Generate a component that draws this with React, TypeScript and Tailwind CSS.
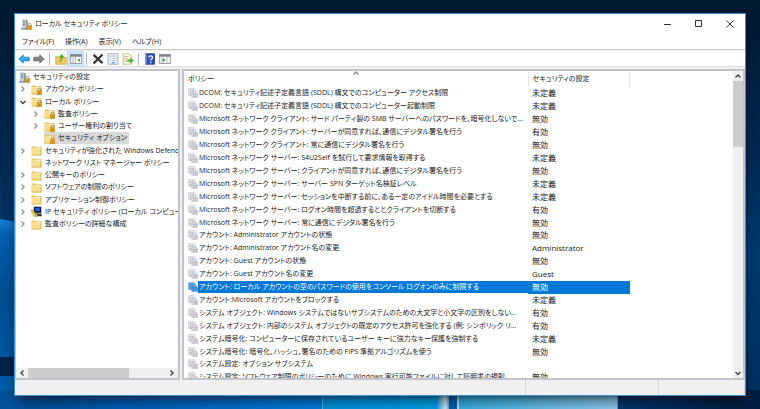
import { useState } from 'react';
import type { ReactNode } from 'react';
import clsx from 'clsx';

type IconName = 'server' | 'folder' | 'locked' | 'ipsec';

type Node = {
  label: string;
  icon: IconName;
  depth: number;
  state?: 'open' | 'closed';
  selected?: boolean;
};

const menus = ['ファイル(F)', '操作(A)', '表示(V)', 'ヘルプ(H)'];

const nodes: Node[] = [
  { label: 'セキュリティの設定', icon: 'server', depth: 0 },
  { label: 'アカウント ポリシー', icon: 'locked', depth: 1, state: 'closed' },
  { label: 'ローカル ポリシー', icon: 'locked', depth: 1, state: 'open' },
  { label: '監査ポリシー', icon: 'locked', depth: 2, state: 'closed' },
  { label: 'ユーザー権利の割り当て', icon: 'locked', depth: 2, state: 'closed' },
  { label: 'セキュリティ オプション', icon: 'locked', depth: 2, selected: true },
  { label: 'セキュリティが強化された Windows Defender', icon: 'folder', depth: 1, state: 'closed' },
  { label: 'ネットワーク リスト マネージャー ポリシー', icon: 'folder', depth: 1 },
  { label: '公開キーのポリシー', icon: 'folder', depth: 1, state: 'closed' },
  { label: 'ソフトウェアの制限のポリシー', icon: 'folder', depth: 1, state: 'closed' },
  { label: 'アプリケーション制御ポリシー', icon: 'folder', depth: 1, state: 'closed' },
  { label: 'IP セキュリティ ポリシー (ローカル コンピューター)', icon: 'ipsec', depth: 1, state: 'closed' },
  { label: '監査ポリシーの詳細な構成', icon: 'folder', depth: 1, state: 'closed' },
];

const policies: [string, string][] = [
  ['DCOM: セキュリティ記述子定義言語 (SDDL) 構文でのコンピューター アクセス制限', '未定義'],
  ['DCOM: セキュリティ記述子定義言語 (SDDL) 構文でのコンピューター起動制限', '未定義'],
  ['Microsoft ネットワーク クライアント: サード パーティ製の SMB サーバーへのパスワードを、暗号化しないで...', '無効'],
  ['Microsoft ネットワーク クライアント: サーバーが同意すれば、通信にデジタル署名を行う', '有効'],
  ['Microsoft ネットワーク クライアント: 常に通信にデジタル署名を行う', '無効'],
  ['Microsoft ネットワーク サーバー: S4U2Self を試行して要求情報を取得する', '未定義'],
  ['Microsoft ネットワーク サーバー: クライアントが同意すれば、通信にデジタル署名を行う', '無効'],
  ['Microsoft ネットワーク サーバー: サーバー SPN ターゲット名検証レベル', '未定義'],
  ['Microsoft ネットワーク サーバー: セッションを中断する前に、ある一定のアイドル時間を必要とする', '未定義'],
  ['Microsoft ネットワーク サーバー: ログオン時間を超過するととクライアントを切断する', '有効'],
  ['Microsoft ネットワーク サーバー: 常に通信にデジタル署名を行う', '無効'],
  ['アカウント: Administrator アカウントの状態', '無効'],
  ['アカウント: Administrator アカウント名の変更', 'Administrator'],
  ['アカウント: Guest アカウントの状態', '無効'],
  ['アカウント: Guest アカウント名の変更', 'Guest'],
  ['アカウント: ローカル アカウントの空のパスワードの使用をコンソール ログオンのみに制限する', '無効'],
  ['アカウント:Microsoft アカウントをブロックする', '未定義'],
  ['システム オブジェクト: Windows システムではないサブシステムのための大文字と小文字の区別をしない...', '有効'],
  ['システム オブジェクト: 内部のシステム オブジェクトの既定のアクセス許可を強化する (例: シンボリック リ...', '有効'],
  ['システム暗号化: コンピューターに保存されているユーザー キーに強力なキー保護を強制する', '未定義'],
  ['システム暗号化: 暗号化、ハッシュ、署名のための FIPS 準拠アルゴリズムを使う', '無効'],
  ['システム設定: オプション サブシステム', ''],
  ['システム設定: ソフトウェア制限のポリシーのために Windows 実行可能ファイルに対して証明書の規則...', '無効'],
];

function Desktop() {
  return (
    <svg aria-hidden="true" className="absolute inset-0 h-full w-full" viewBox="0 0 760 409" preserveAspectRatio="none">
      <defs>
        <linearGradient id="base" x1="0" y1="0" x2="0" y2="1">
          <stop offset="0" stopColor="#001830" />
          <stop offset="0.4" stopColor="#002b55" />
          <stop offset="0.62" stopColor="#003a72" />
          <stop offset="1" stopColor="#00305f" />
        </linearGradient>
        <linearGradient id="left" x1="0" y1="0" x2="0" y2="1">
          <stop offset="0" stopColor="#1483dc" />
          <stop offset="0.08" stopColor="#0561b4" />
          <stop offset="0.4" stopColor="#004d92" />
          <stop offset="1" stopColor="#0062b4" />
        </linearGradient>
        <linearGradient id="floor" x1="0" y1="0" x2="1" y2="0">
          <stop offset="0" stopColor="#00539a" />
          <stop offset="0.4" stopColor="#0064c4" />
          <stop offset="1" stopColor="#0087ec" />
        </linearGradient>
        <linearGradient id="cyan" x1="0" y1="0" x2="1" y2="0">
          <stop offset="0" stopColor="#009cf0" />
          <stop offset="0.88" stopColor="#00acf8" />
          <stop offset="0.95" stopColor="#e4f8ff" />
          <stop offset="1" stopColor="#0078d0" />
        </linearGradient>
        <linearGradient id="pane" x1="0" y1="0" x2="1" y2="0">
          <stop offset="0" stopColor="#38bcf5" />
          <stop offset="1" stopColor="#98d8ff" />
        </linearGradient>
        <linearGradient id="corner" x1="0" y1="0" x2="1" y2="0">
          <stop offset="0" stopColor="#003b73" />
          <stop offset="1" stopColor="#001c40" />
        </linearGradient>
      </defs>
      <rect width="760" height="409" fill="url(#base)" />
      <path d="M0 219L15 222V409H0Z" fill="url(#left)" />
      <rect y="357" width="15" height="19" fill="#00244c" />
      <rect y="390" width="323" height="19" fill="url(#floor)" />
      <rect x="322" y="390" width="130" height="19" fill="url(#cyan)" />
      <rect x="322" y="390" width="1" height="19" fill="#4fc7f2" />
      <rect x="449" y="390" width="8" height="19" fill="#0068ba" />
      <rect x="457" y="390" width="160" height="19" fill="url(#pane)" />
      <rect x="457" y="390" width="2" height="19" fill="#c5f0fd" />
      <rect x="617" y="390" width="1" height="19" fill="#4fb0d2" />
      <rect x="618" y="390" width="142" height="19" fill="url(#corner)" />
    </svg>
  );
}

function Lock() {
  return (
    <>
      <path d="M10.5 9.5V8a2 2 0 0 1 4 0v1.500" fill="none" stroke="#8a8577" strokeWidth="1.200" />
      <rect x="9" y="9.500" width="7" height="6" rx="0.500" fill="#e5a51b" stroke="#a87410" strokeWidth="0.600" />
      <path d="M12.500 11.500v2" stroke="#7b5208" />
    </>
  );
}

function TreeIcon({ name }: { name: IconName }) {
  return (
    <svg aria-hidden="true" viewBox="0 0 16 16" className="h-[11px] w-[11px] shrink-0">
      {name === 'server' && (
        <>
          <path d="M2 1h6l2 1v13H2z" fill="#8fa0ad" />
          <path d="M2 1h5v14H2z" fill="#c3d0d9" />
          <path d="M3 3h3M3 5.500h3M3 8h3" stroke="#546877" />
          <path d="M0 14.500h10" stroke="#6c7c88" strokeWidth="1.500" />
          <Lock />
        </>
      )}
      {(name === 'folder' || name === 'locked') && (
        <>
          <path d="M1 2h5l1 1h8v12H1z" fill="#e5bd60" />
          <path d="M1 4h13v11H1z" fill="#fbdf91" />
          <path d="M7 4h8v2H7z" fill="#fff2c4" />
          <path d="M1 14.500h14M14.500 4v11" stroke="#d9ab48" />
          {name === 'locked' && <Lock />}
        </>
      )}
      {name === 'ipsec' && (
        <>
          <path d="M4 1h11v9H4z" fill="#10183c" />
          <path d="M6 2.500h7v5H6z" fill="#2456e0" />
          <path d="M5 11h10l1 4H4z" fill="#33394a" />
          <path d="M1 5l4 3 1 3 4 3-2 2-4-3-3-4z" fill="#e7d43a" stroke="#6d6310" strokeWidth="0.600" />
        </>
      )}
    </svg>
  );
}

function PolicyIcon({ selected }: { selected: boolean }) {
  const ink = selected ? '#3a84c8' : '#a9a9b2';
  return (
    <svg aria-hidden="true" viewBox="0 0 16 16" className="h-[10px] w-[10px] shrink-0">
      <path d="M1 1h9l2 2v9H1z" fill={selected ? '#69b0ea' : '#f2f2f6'} stroke={ink} strokeWidth="0.800" />
      <path d="M3 3.500h2v2H3zM7 3.500h2v2H7zM3 8h2v2H3z" fill="none" stroke={ink} />
      <path d="M6 7h8l1.500 1.500V15H6z" fill={selected ? '#4f9cdc' : '#e3e3ea'} stroke={ink} strokeWidth="0.800" />
      <path d="M8 9.500h2v2H8zM12 9.500h2v2h-2zM8 13.500h6" fill="none" stroke={ink} />
    </svg>
  );
}

function Chevron({ d, className }: { d: string; className?: string }) {
  return (
    <svg aria-hidden="true" viewBox="0 0 8 8" className={clsx('h-2 w-2', className)}>
      <path d={d} fill="none" stroke="currentColor" strokeWidth="1.300" />
    </svg>
  );
}

const UP = 'M1.500 5.500L4 3l2.500 2.500';
const DOWN = 'M1.500 3L4 5.500 6.500 3';
const LEFT = 'M5.500 1.500L3 4l2.500 2.500';
const RIGHT = 'M2.500 1.500L5 4 2.500 6.500';

function Tool({ label, active, children }: { label: string; active?: boolean; children: ReactNode }) {
  return (
    <button
      type="button"
      aria-label={label}
      className={clsx('flex h-[14px] w-[15px] items-center justify-center', active && 'bg-[#cce8ff] outline outline-[#b5dcff]')}
    >
      <svg viewBox="0 0 16 16" className="h-3 w-3">
        {children}
      </svg>
    </button>
  );
}

function Divider() {
  return <span className="mx-[3px] h-3 w-px bg-[#b5b5b5]" />;
}

function Toolbar() {
  const arrow = 'M1 8l6-5.500V5.500h8v5H7v3z';
  return (
    <div className="flex h-[15px] items-center bg-white pl-[1px]">
      <Tool label="戻る">
        <path d={arrow} fill="#38a8e8" stroke="#1879b8" />
      </Tool>
      <Tool label="進む">
        <path d={arrow} transform="translate(16) scale(-1 1)" fill="#858585" stroke="#686868" />
      </Tool>
      <Divider />
      <Tool label="上へ">
        <path d="M1 5h5l1 1h8v9H1z" fill="#f2cb68" stroke="#cfa244" />
        <path d="M4 12c4 0 6-3 6-6h2.500L9 1 5.500 6H8c0 2-1 4-4 6z" fill="#43b02a" />
      </Tool>
      <Tool label="コンソール ツリーの表示" active>
        <path d="M0.500 2h15v12H0.500z" fill="#fff" stroke="#7a8087" />
        <path d="M0.500 2h15v3H0.500z" fill="#7e858c" />
        <path d="M2 7h4M2 9.500h4M2 12h4M7.500 5v9" stroke="#9aa1a8" />
        <path d="M13 7v5L9.500 9.500z" fill="#35a13a" />
      </Tool>
      <Divider />
      <Tool label="削除">
        <path d="M2 2.500l12 11M14 2L2 14" stroke="#333" strokeWidth="3" />
      </Tool>
      <Tool label="プロパティ">
        <path d="M1.500 1h13v14h-13z" fill="#f5f7f9" stroke="#8d949a" />
        <path d="M3.500 4h9M3.500 7h2M7 7h6M3.500 10h2M7 10h6" stroke="#9fb6c6" />
        <path d="M6 12h5v2H6z" fill="#59b3db" />
      </Tool>
      <Tool label="一覧のエクスポート">
        <path d="M1.500 1h8l3 3v11h-11z" fill="#fffbe0" stroke="#b3a878" />
        <path d="M3 5h6M3 8h4M3 11h4" stroke="#a39c7c" />
        <path d="M7 8.500h4V6l5 4-5 4v-2.500H7z" fill="#4fb83a" />
      </Tool>
      <Divider />
      <Tool label="ヘルプ">
        <path d="M2 1h12v14H2z" fill="#2b50c4" stroke="#16307e" />
        <path d="M2.500 1v14" stroke="#a8b8ec" strokeWidth="1.500" />
        <path d="M6.500 6c0-3 5-3 5 0 0 2-2.500 1.500-2.500 4M9 11.500v2" fill="none" stroke="#fff" strokeWidth="1.700" />
      </Tool>
      <Tool label="操作ウィンドウの表示">
        <path d="M0.500 2h15v12H0.500z" fill="#fff" stroke="#7a8087" />
        <path d="M0.500 2h15v3H0.500z" fill="#7e858c" />
        <path d="M2 7h5M2 9.500h5M2 12h5M10.500 5v9" stroke="#9aa1a8" />
        <path d="M5 7v5l4-2.500z" fill="#35a13a" />
      </Tool>
    </div>
  );
}

function Tree() {
  return (
    <nav aria-label="コンソール ツリー" className="flex w-[165px] shrink-0 flex-col overflow-hidden border-2 border-l border-[#c3c3cb] bg-white">
      <ul className="flex h-[159px] shrink-0 flex-col justify-between">
        {nodes.map((node) => (
          <li
            key={node.label}
            className={clsx(
              'flex h-3 items-center whitespace-nowrap',
              node.depth === 0 && 'pl-[3px]',
              node.depth === 1 && 'pl-[3px]',
              node.depth === 2 && 'pl-4'
            )}
          >
            {node.depth > 0 && (
              <span className="flex w-3 shrink-0">
                {node.state && (
                  <button type="button" aria-label={`${node.label} ${node.state === 'open' ? '折りたたむ' : '展開'}`}>
                    <Chevron
                      d={node.state === 'open' ? DOWN : RIGHT}
                      className={node.state === 'open' ? 'text-[#404040]' : 'text-[#909090]'}
                    />
                  </button>
                )}
              </span>
            )}
            <span className={clsx('flex h-3 items-center gap-[3px]', node.selected && 'bg-[#d9d9d9] pr-[2px]')}>
              <TreeIcon name={node.icon} />
              {node.label}
            </span>
          </li>
        ))}
      </ul>
      <div className="mt-auto flex h-[10px] items-center bg-[#f0f0f0] text-[#404040]">
        <button type="button" aria-label="左へスクロール" className="flex w-3 justify-center">
          <Chevron d={LEFT} />
        </button>
        <div className="flex h-full flex-1">
          <div className="h-full w-[73%] bg-[#cdcdcd]" />
        </div>
        <button type="button" aria-label="右へスクロール" className="flex w-3 justify-center">
          <Chevron d={RIGHT} />
        </button>
      </div>
    </nav>
  );
}

function PolicyList() {
  const [selected, setSelected] = useState(15);

  return (
    <section className="flex min-w-0 flex-1 overflow-hidden border-2 border-[#c3c3cb] bg-white">
      <div className="min-w-0 flex-1 overflow-hidden">
        <table className="h-[313px] w-[446px] table-fixed border-collapse text-left">
          <thead>
            <tr className="h-4">
              <th className="relative w-[344px] border-r border-[#e5e5e5] p-0 pl-1 font-normal">
                ポリシー
                <Chevron d={UP} className="absolute -top-[2px] left-1/2 -ml-1 text-[#808080]" />
              </th>
              <th className="border-r border-[#e5e5e5] p-0 pl-1 font-normal">セキュリティの設定</th>
            </tr>
          </thead>
          <tbody>
            {policies.map(([name, value], i) => (
              <tr key={name} onClick={() => setSelected(i)}>
                <td className="p-0 pl-1">
                  <div className="flex items-center">
                    <PolicyIcon selected={i === selected} />
                    <span className={clsx('min-w-0 flex-1 truncate pl-[1px]', i === selected && 'bg-[#0078d7] text-white')}>{name}</span>
                  </div>
                </td>
                <td className={clsx('p-0 pl-1 text-[8px]', i === selected && 'bg-[#0078d7] text-white')}>{value}</td>
              </tr>
            ))}
          </tbody>
        </table>
      </div>
      <div className="flex w-[10px] shrink-0 flex-col items-center bg-[#f0f0f0] text-[#404040]">
        <button type="button" aria-label="上へスクロール" className="py-px">
          <Chevron d={UP} />
        </button>
        <div className="w-full flex-1">
          <div className="h-[23%] w-full bg-[#cdcdcd]" />
        </div>
        <button type="button" aria-label="下へスクロール" className="py-px">
          <Chevron d={DOWN} />
        </button>
      </div>
    </section>
  );
}

export default function App() {
  return (
    <div className="relative flex h-screen flex-col overflow-hidden px-[14px] pt-[13px] pb-[13px] font-['Open_Sans','Noto_Sans_CJK_JP',sans-serif] text-[7px] leading-3 text-[#1a1a1a] [font-feature-settings:'palt']">
      <Desktop />
      <main className="relative flex min-h-0 flex-1 flex-col border border-[#3a91d2] bg-[#f0f0f0] shadow-lg shadow-black/50">
        <header className="flex h-5 shrink-0 items-center bg-white pl-[6px]">
          <TreeIcon name="server" />
          <h1 className="ml-[3px] flex-1">ローカル セキュリティ ポリシー</h1>
          <div className="flex text-[#333]">
            <button type="button" aria-label="最小化" className="flex w-[31px] justify-center">
              <svg viewBox="0 0 8 8" className="h-2 w-2">
                <path d="M0 4.500h7" stroke="currentColor" />
              </svg>
            </button>
            <button type="button" aria-label="最大化" className="flex w-[31px] justify-center">
              <svg viewBox="0 0 8 8" className="h-2 w-2">
                <path d="M0.500 0.500h6v6h-6z" fill="none" stroke="currentColor" />
              </svg>
            </button>
            <button type="button" aria-label="閉じる" className="flex w-[31px] justify-center">
              <svg viewBox="0 0 8 8" className="h-2 w-2">
                <path d="M0.500 0.500l7 7M7.500 0.500l-7 7" stroke="currentColor" />
              </svg>
            </button>
          </div>
        </header>
        <nav aria-label="メニュー" className="flex h-4 shrink-0 items-center gap-[11px] border-b border-[#c8c8c8] bg-white pl-[7px]">
          {menus.map((menu) => (
            <button key={menu} type="button">
              {menu}
            </button>
          ))}
        </nav>
        <div className="shrink-0 border-b border-[#dcdcdc] pt-px">
          <Toolbar />
        </div>
        <div className="flex min-h-0 flex-1 gap-[2px] pt-[2px]">
          <Tree />
          <PolicyList />
        </div>
        <footer className="flex h-[15px] shrink-0 justify-end">
          <span className="w-[133px] border-l border-[#d7d7d7]" />
          <span className="w-[87px] border-x border-[#d7d7d7]" />
        </footer>
      </main>
    </div>
  );
}
